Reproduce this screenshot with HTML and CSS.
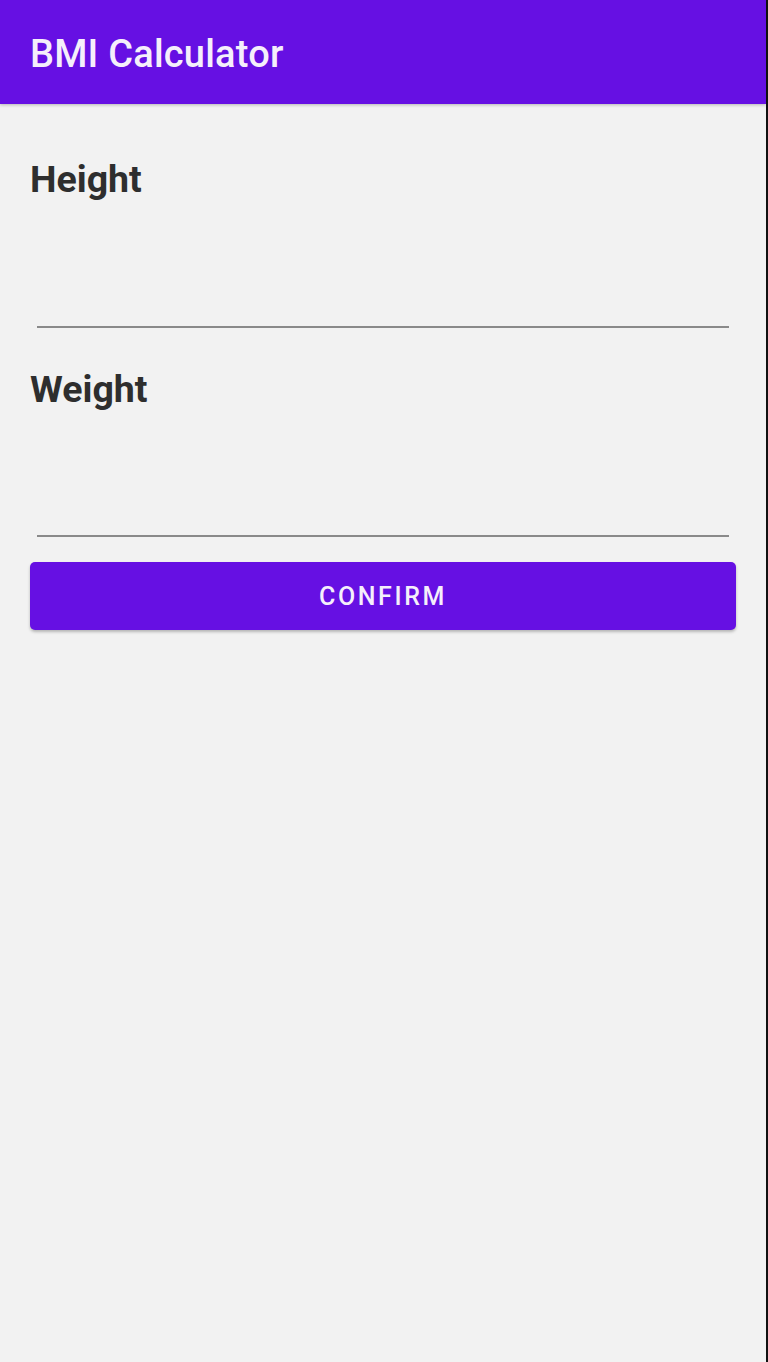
FILE: index.html
```html
<!DOCTYPE html>
<html>
<head>
<meta charset="utf-8">
<link rel="stylesheet" href="styles.css">
</head>
<body>
<div class="screen">
  <div class="app">
    <header class="appbar"><h1 class="title">BMI Calculator</h1></header>
    <main class="content">
      <div class="field">
        <label class="label">Height</label>
        <div class="input"></div>
      </div>
      <div class="field">
        <label class="label">Weight</label>
        <div class="input"></div>
      </div>
      <button class="confirm">CONFIRM</button>
    </main>
  </div>
  <div class="edge"></div>
</div>
</body>
</html>
```
FILE: styles.css
```css
html, body {
  margin: 0;
  padding: 0;
}
body {
  width: 768px;
  height: 1362px;
  overflow: hidden;
  font-family: Roboto, "Liberation Sans", sans-serif;
}
.screen {
  display: flex;
  height: 1362px;
}
.app {
  width: 766px;
  background: #f2f2f2;
  display: flex;
  flex-direction: column;
}
.edge {
  width: 2px;
  background: #111;
}
.appbar {
  height: 104px;
  background: #6610e3;
  display: flex;
  align-items: center;
  padding-left: 30px;
  box-shadow: 0 1px 3px rgba(0,0,0,0.25);
  position: relative;
  z-index: 1;
}
.title {
  margin: 0;
  font-size: 38px;
  font-weight: 500;
  color: #f5effb;
  letter-spacing: 0.2px;
  padding-top: 4px;
}
.content {
  padding: 0 30px;
  display: flex;
  flex-direction: column;
}
.field {
  display: flex;
  flex-direction: column;
}
.label {
  font-size: 37.5px;
  font-weight: 700;
  color: #2e2e2e;
  line-height: 42px;
}
.field:first-child .label {
  margin-top: 54px;
}
.field:first-child .input {
  height: 126px;
}
.field + .field .label {
  margin-top: 40px;
}
.input {
  margin: 0 7px;
  height: 125px;
  border-bottom: 2px solid #8a8a8a;
}
.confirm {
  margin-top: 25px;
  height: 68px;
  border: none;
  border-radius: 5px;
  background: #6610e3;
  color: #f5effb;
  font-family: Roboto, "Liberation Sans", sans-serif;
  font-size: 25px;
  font-weight: 500;
  letter-spacing: 2.6px;
  box-shadow: 0 2px 3px rgba(0,0,0,0.25);
  padding: 0;
}
```
